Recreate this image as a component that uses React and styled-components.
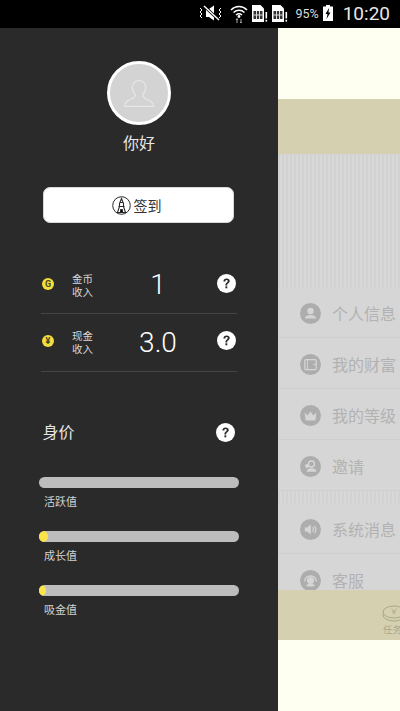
import React from 'react';
import styled, { createGlobalStyle } from 'styled-components';

const GlobalStyle = createGlobalStyle`
    html, body {
        margin: 0;
        padding: 0;
        background: #000;
    }
    * {
        box-sizing: border-box;
    }
`;

const fontStack = `Roboto, "Noto Sans CJK SC", sans-serif`;

const Helper = () => (
    <HelpIcon viewBox="0 0 19 19">
        <circle cx="9.5" cy="9.5" r="9.5" fill="#fff" />
        <path d="M6.4 7.4c0-1.9 1.3-3 3.2-3s3.1 1 3.1 2.7c0 2.2-2.5 2.2-2.5 4.3H8.4c0-2.8 2.3-2.8 2.3-4.2 0-.7-.4-1.1-1.1-1.1-.8 0-1.2.5-1.2 1.3z" fill="#2a2a2a" />
        <rect x="8.4" y="12.3" width="1.9" height="2" fill="#2a2a2a" />
    </HelpIcon>
);

const SimIcon = () => (
    <svg width="16" height="17" viewBox="0 0 16 17">
        <path d="M0 0h8.500L12 3.500V17H0z" fill="#fff" />
        <rect x="1.500" y="6" width="9" height="8" fill="#333" />
        <path d="M4.500 6v8M7.500 6v8M1.500 10h9" stroke="#ddd" strokeWidth="1" />
        <rect x="13.500" y="7" width="1.600" height="6.500" fill="#fff" />
        <rect x="13.500" y="14.800" width="1.600" height="1.800" fill="#fff" />
    </svg>
);

const menuIcons = {
    person: (
        <>
            <circle cx="10.5" cy="8" r="3.2" fill="#d6d6d6" />
            <path d="M4.8 15.6c.4-2.6 2.8-3.6 5.7-3.6s5.3 1 5.7 3.6z" fill="#d6d6d6" />
        </>
    ),
    wallet: (
        <>
            <rect x="4.8" y="5.6" width="11.4" height="10" rx="1" fill="none" stroke="#d6d6d6" strokeWidth="1.2" />
            <path d="M7.4 5.8v9.600M13.400 10.400h2.600" stroke="#d6d6d6" strokeWidth="1" />
        </>
    ),
    crown: <path d="M4.6 7.6l3 2.8 2.9-4 2.9 4 3-2.8-1 7.8H5.6z" fill="#d6d6d6" />,
    invite: (
        <>
            <circle cx="11.5" cy="8" r="3" fill="none" stroke="#d6d6d6" strokeWidth="1.4" />
            <path d="M6.6 15.8c.3-2.6 2.2-3.6 4.9-3.6s4.6 1 4.9 3.6z" fill="#d6d6d6" />
            <circle cx="7" cy="10" r="2" fill="#d6d6d6" />
        </>
    ),
    sound: (
        <>
            <path d="M4.8 8.4h2.4l3.6-3v10.200l-3.600-3H4.800z" fill="#d6d6d6" />
            <path d="M12.600 8.200c1 1.300 1 3.300 0 4.600M14.400 6.800c1.700 2.200 1.700 5.200 0 7.400" fill="none" stroke="#d6d6d6" strokeWidth="1.100" />
        </>
    ),
    service: (
        <>
            <path d="M4.800 11.500c0-7.400 11.400-7.400 11.400 0" fill="none" stroke="#d6d6d6" strokeWidth="1.400" />
            <circle cx="10.500" cy="10.500" r="3.600" fill="#d6d6d6" />
            <path d="M6 15.400c1-1.800 8-1.800 9 0-1.500 1.400-7.500 1.400-9 0z" fill="#d6d6d6" />
        </>
    ),
};

const MenuRow = ({ icon, label }) => (
    <Row>
        <RowIcon viewBox="0 0 21 21">
            <circle cx="10.5" cy="10.5" r="10.5" fill="#adadad" />
            {menuIcons[icon]}
        </RowIcon>
        <RowLabel>{label}</RowLabel>
    </Row>
);

const Meter = ({ label, fill }) => (
    <MeterBlock>
        <MeterTrack>
            <MeterFill style={{ width: fill }} />
        </MeterTrack>
        <MeterLabel>{label}</MeterLabel>
    </MeterBlock>
);

const App = () => {
    return (
        <Screen>
            <GlobalStyle />
            <StatusBar>
                <MuteIcon width="26" height="16" viewBox="0 0 26 16">
                    <path d="M8 4h3l5-3.500v15L11 12H8z" fill="#fff" />
                    <path d="M6 1l15 14" stroke="#000" strokeWidth="3" />
                    <path d="M6 1l15 14" stroke="#fff" strokeWidth="1.400" />
                    <path d="M2 3l2 2-2 2 2 2-2 2 2 2M23 3l-2 2 2 2-2 2 2 2-2 2" fill="none" stroke="#fff" strokeWidth="1" />
                </MuteIcon>
                <svg width="18" height="19" viewBox="0 0 18 19">
                    <path d="M1 6c4.600-4.600 11.400-4.600 16 0M3.500 8.500c3.200-3 7.800-3 11 0M6 11c1.800-1.500 4.200-1.500 6 0" fill="none" stroke="#fff" strokeWidth="1.500" />
                    <circle cx="9" cy="12.500" r="1.400" fill="#fff" />
                    <path d="M7 15v4M6 16l1-1.500 1 1.500M11 19v-4M10 18l1 1 1-1" fill="none" stroke="#aaa" strokeWidth="1" />
                </svg>
                <SimIcon />
                <SimIcon />
                <BatteryText>95%</BatteryText>
                <svg width="10" height="16" viewBox="0 0 10 16">
                    <path d="M3 0h4v1.500h3V16H0V1.500h3z" fill="#fff" />
                    <path d="M6 3L2.500 9h2L3.500 14 7.500 7.500h-2z" fill="#000" />
                </svg>
                <Clock>10:20</Clock>
            </StatusBar>
            <Body>
                <Drawer>
                    <Avatar>
                        <svg width="32" height="29" viewBox="0 0 36 32">
                            <path d="M18 1.500c-4.800 0-7.500 3.500-7.500 8 0 3.500 1.500 6 3.500 7.800 0 2.200-1 3.200-4 4.600-4 1.800-8 3.600-8.500 8.600h33c-.5-5-4.500-6.800-8.500-8.600-3-1.400-4-2.400-4-4.600 2-1.800 3.500-4.300 3.500-7.800 0-4.500-2.700-8-7.500-8z" fill="none" stroke="#e6e6e6" strokeWidth="1.300" />
                        </svg>
                    </Avatar>
                    <Greeting>你好</Greeting>
                    <SignButton>
                        <svg width="19" height="19" viewBox="0 0 19 19">
                            <circle cx="9.500" cy="9.500" r="8.800" fill="none" stroke="#2a2a2a" strokeWidth="1" />
                            <path d="M9.500 2.500L7.500 7.500v3L5.500 16.500h8l-2-6v-3z" fill="none" stroke="#2a2a2a" strokeWidth="1.100" />
                            <path d="M6.500 10.500h6M8.500 16.500v-3h2v3M8 6.500h3" stroke="#2a2a2a" strokeWidth="1" />
                        </svg>
                        签到
                    </SignButton>
                    <IncomeList>
                        <IncomeRow>
                            <Coin>G</Coin>
                            <IncomeLabel>金币<br />收入</IncomeLabel>
                            <IncomeValue>1</IncomeValue>
                            <Helper />
                        </IncomeRow>
                        <IncomeRow>
                            <Coin>¥</Coin>
                            <IncomeLabel>现金<br />收入</IncomeLabel>
                            <IncomeValue>3.0</IncomeValue>
                            <Helper />
                        </IncomeRow>
                    </IncomeList>
                    <WorthHeader>
                        身价
                        <Helper />
                    </WorthHeader>
                    <Meter label="活跃值" fill="0" />
                    <Meter label="成长值" fill="9px" />
                    <Meter label="吸金值" fill="7px" />
                </Drawer>
                <Behind>
                    <TopBand />
                    <KhakiBand />
                    <Stripes $height={133} />
                    <MenuGroup>
                        <MenuRow icon="person" label="个人信息" />
                        <MenuRow icon="wallet" label="我的财富" />
                        <MenuRow icon="crown" label="我的等级" />
                        <MenuRow icon="invite" label="邀请" />
                    </MenuGroup>
                    <Stripes $height={12} />
                    <ClippedGroup>
                        <MenuRow icon="sound" label="系统消息" />
                        <MenuRow icon="service" label="客服" />
                    </ClippedGroup>
                    <TabBar>
                        <TabItem>
                            <svg width="24" height="17" viewBox="0 0 24 17">
                                <ellipse cx="12" cy="10" rx="11" ry="6" fill="none" stroke="#a9a68c" strokeWidth="1" />
                                <ellipse cx="12" cy="7" rx="11" ry="6" fill="#d5d1b0" stroke="#a9a68c" strokeWidth="1" />
                                <path d="M9.500 3.500L12 6.500l2.500-3M12 6.500v3M10 7h4" fill="none" stroke="#a9a68c" strokeWidth=".8" />
                            </svg>
                            <TabLabel>任务</TabLabel>
                        </TabItem>
                    </TabBar>
                    <BottomBand />
                </Behind>
            </Body>
        </Screen>
    );
};

const Screen = styled.div`
    width: 400px;
    height: 711px;
    display: flex;
    flex-direction: column;
    overflow: hidden;
    font-family: ${fontStack};
    background: #000;
`;

const StatusBar = styled.div`
    height: 28px;
    flex-shrink: 0;
    display: flex;
    align-items: center;
    justify-content: flex-end;
    gap: 4px;
    padding: 0 10px 2px 0;
    background: #000;
    color: #fff;
`;

const MuteIcon = styled.svg`
    margin-right: 2px;
`;

const BatteryText = styled.span`
    font-size: 12.5px;
    color: #ddd;
    margin-left: 3px;
`;

const Clock = styled.span`
    font-size: 19px;
    margin-left: 6px;
    color: #e8e8e8;
`;

const Body = styled.div`
    flex: 1;
    display: flex;
    min-height: 0;
`;

const Drawer = styled.aside`
    width: 278px;
    flex-shrink: 0;
    display: flex;
    flex-direction: column;
    align-items: center;
    padding-top: 33px;
    background: #2a2a2a;
`;

const Avatar = styled.div`
    width: 64px;
    height: 64px;
    display: flex;
    align-items: center;
    justify-content: center;
    border-radius: 50%;
    border: 3px solid #fff;
    background: #d3d3d3;
`;

const Greeting = styled.div`
    margin-top: 5px;
    font-size: 16px;
    line-height: 28px;
    color: #e6e6e6;
`;

const SignButton = styled.button`
    width: 191px;
    height: 36px;
    margin: 29px 0 0 -1px;
    display: flex;
    align-items: center;
    justify-content: center;
    gap: 3px;
    padding: 0 4px 0 0;
    border: 1px solid #d8d8d8;
    border-radius: 7px;
    background: #fff;
    color: #333;
    font-family: ${fontStack};
    font-size: 14px;
`;

const IncomeList = styled.div`
    width: 196px;
    margin: 42px 0 0 0;
`;

const IncomeRow = styled.div`
    height: 58px;
    display: grid;
    grid-template-columns: 30px 49px 74px 1fr;
    align-items: center;
    padding: 0 0 2px 1px;
    border-bottom: 1px solid #454545;

    &:first-child {
        height: 49px;
        padding-bottom: 10px;
    }
`;

const Coin = styled.span`
    width: 12px;
    height: 12px;
    margin-bottom: 1px;
    display: flex;
    align-items: center;
    justify-content: center;
    border-radius: 50%;
    background: #f3de3d;
    color: #4a4520;
    font-size: 9px;
    font-weight: 700;
`;

const IncomeLabel = styled.span`
    margin-top: 3px;
    font-size: 10.5px;
    line-height: 13px;
    color: #d8d8d8;
`;

const IncomeValue = styled.span`
    margin-top: 2px;
    text-align: center;
    font-size: 28px;
    font-weight: 300;
    line-height: 30px;
    color: #fff;
`;

const HelpIcon = styled.svg`
    width: 19px;
    height: 19px;
    justify-self: end;
    margin: 0 1px 2px 0;
`;

const WorthHeader = styled.div`
    width: 196px;
    margin: 50px 0 33px -1px;
    padding: 0 1px 0 2px;
    display: flex;
    align-items: center;
    justify-content: space-between;
    font-size: 16px;
    line-height: 22px;
    color: #e6e6e6;
`;

const MeterBlock = styled.div`
    width: 200px;
    height: 54px;
`;

const MeterTrack = styled.div`
    height: 11px;
    border-radius: 6px;
    overflow: hidden;
    background: #bdbdbd;
`;

const MeterFill = styled.div`
    height: 100%;
    border-radius: 0 5px 5px 0;
    background: #fbe44a;
`;

const MeterLabel = styled.div`
    margin: 7px 0 0 5px;
    font-size: 11px;
    line-height: 15px;
    color: #d4d4d4;
`;

const Behind = styled.main`
    flex: 1;
    min-width: 0;
    display: flex;
    flex-direction: column;
    overflow: hidden;
    background: #d6d6d6;
`;

const TopBand = styled.div`
    height: 71px;
    background: #fffff1;
`;

const KhakiBand = styled.div`
    height: 55px;
    background: #d5d1b0;
`;

const Stripes = styled.div`
    height: ${(props) => props.$height}px;
    flex-shrink: 0;
    background: repeating-linear-gradient(90deg, #d2d2d2 0 2px, #d8d8d8 2px 4px);
`;

const MenuGroup = styled.div`
    display: flex;
    flex-direction: column;
`;

const ClippedGroup = styled(MenuGroup)`
    height: 87px;
    overflow: hidden;
`;

const Row = styled.div`
    height: 51px;
    flex-shrink: 0;
    display: flex;
    align-items: center;
    gap: 11px;
    padding: 2px 0 0 22px;
    white-space: nowrap;
    background: #d6d6d6;
    border-bottom: 1px solid #cfcfcf;
`;

const RowIcon = styled.svg`
    width: 21px;
    height: 21px;
    flex-shrink: 0;
`;

const RowLabel = styled.span`
    font-size: 16px;
    color: #b2b2b2;
`;

const TabBar = styled.div`
    height: 50px;
    flex-shrink: 0;
    padding: 15px 0 0 104px;
    background: #d5d1b0;
`;

const TabItem = styled.div`
    display: flex;
    flex-direction: column;
    align-items: flex-start;
    width: 24px;
    white-space: nowrap;
`;

const TabLabel = styled.span`
    margin: 1px 0 0 1px;
    font-size: 9.5px;
    line-height: 13px;
    color: #a9a68c;
`;

const BottomBand = styled.div`
    flex: 1;
    background: #fffff1;
`;

export default App;
